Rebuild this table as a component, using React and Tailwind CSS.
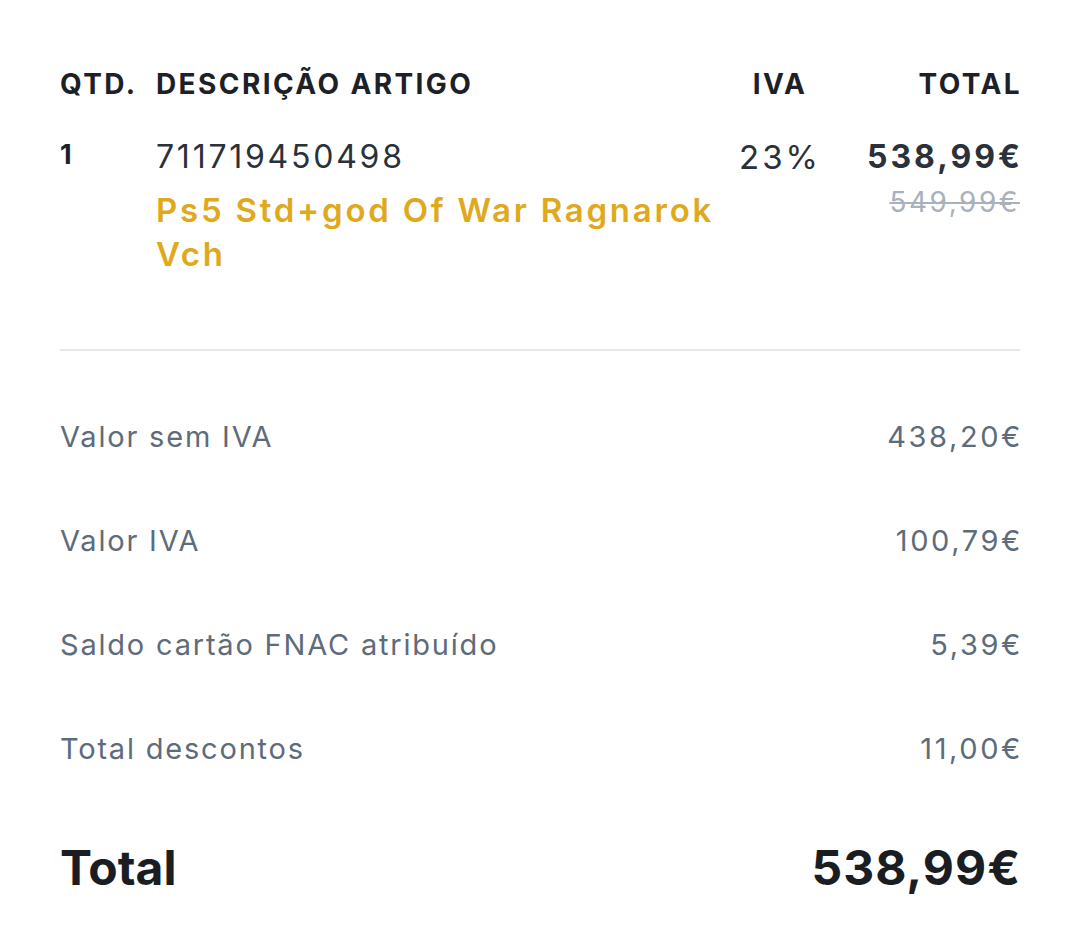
export default function App() {
  const summary = [
    { label: 'Valor sem IVA', value: '438,20€' },
    { label: 'Valor IVA', value: '100,79€' },
    { label: 'Saldo cartão FNAC atribuído', value: '5,39€' },
    { label: 'Total descontos', value: '11,00€' },
  ];

  return (
    <div
      className="w-[1080px] h-[927px] bg-white px-[60px] pt-[64px] text-[#1d2127]"
      style={{ fontFamily: 'Inter, "Noto Sans", sans-serif' }}
    >
      {/* table header */}
      <div className="grid grid-cols-[96px_1fr_110px_185px] text-[28px] font-bold leading-[40px] tracking-[2.4px]">
        <div>QTD.</div>
        <div>DESCRIÇÃO ARTIGO</div>
        <div className="text-center">IVA</div>
        <div className="text-right -mr-[2px]">TOTAL</div>
      </div>

      {/* item */}
      <div className="grid grid-cols-[96px_1fr_110px_185px] mt-[31px]">
        <div className="text-[27px] font-bold leading-[40px]">1</div>
        <div>
          <div className="text-[32px] leading-[44px] text-[#2b313a] tracking-[2.75px]">711719450498</div>
          <div className="mt-[9px] text-[33px] font-semibold leading-[44px] tracking-[2.75px] text-[#e0a91c]">
            Ps5 Std+god Of War Ragnarok Vch
          </div>
        </div>
        <div className="text-center text-[33px] leading-[44px] tracking-[3px] text-[#2b313a]">23%</div>
        <div className="text-right">
          <div className="text-[32px] font-bold leading-[44px] text-[#2b313a] tracking-[3px] -mr-[3px]">538,99€</div>
          <div className="mt-[3px] text-[28px] leading-[40px] tracking-[2.5px] text-[#a9b1bb] line-through">549,99€</div>
        </div>
      </div>

      <div className="mt-[73px] h-[2px] bg-[#e6e9ec]" />

      {/* summary */}
      <div className="mt-[34px] flex flex-col">
        {summary.map((row) => (
          <div key={row.label} className="flex h-[104px] items-center justify-between text-[29px] text-[#5e6b7b]">
            <span className="tracking-[1.8px]">{row.label}</span>
            <span className="tracking-[2.6px] -mr-[3px]">{row.value}</span>
          </div>
        ))}
      </div>

      <div className="mt-[37px] flex items-center justify-between text-[48px] font-bold leading-[60px] text-[#1a1d22]">
        <span>Total</span>
        <span className="tracking-[1px] -mr-[1px]">538,99€</span>
      </div>
    </div>
  );
}
